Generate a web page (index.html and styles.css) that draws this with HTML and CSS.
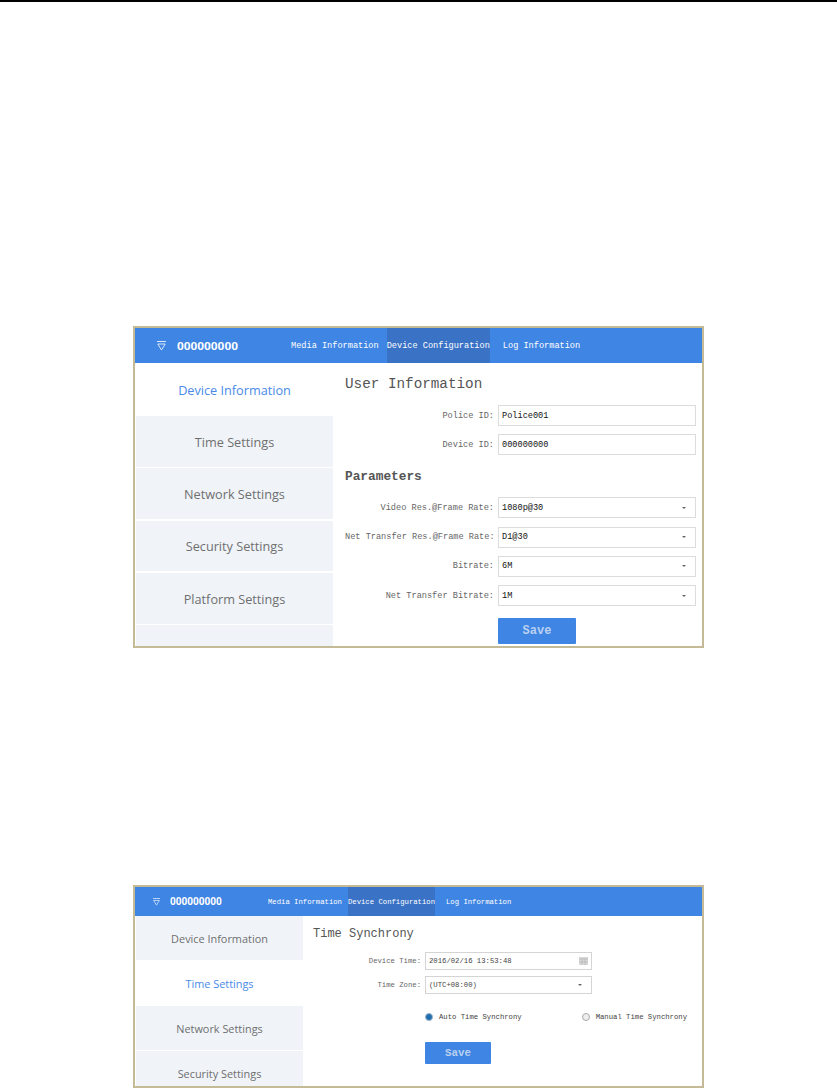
FILE: index.html
```html
<!DOCTYPE html>
<html lang="en">

<head>
    <meta charset="UTF-8">
    <meta name="viewport" content="width=device-width, initial-scale=1.0">
    <title>Device Configuration</title>
    <link rel="stylesheet" href="styles.css">
</head>

<body>
    <div class="top_rule"></div>

    <div class="frame frame_large">
        <div class="header">
            <div class="brand">
                <svg class="brand_icon" viewBox="0 0 9 10"><path d="M0 .5H9M.8 3H8.2L4.5 9Z" /></svg>
                <span class="brand_name">000000000</span>
            </div>
            <div class="nav">
                <div class="nav_item">Media Information</div>
                <div class="nav_item nav_active">Device Configuration</div>
                <div class="nav_item">Log Information</div>
            </div>
        </div>
        <div class="body">
            <div class="side">
                <div class="side_item side_active">Device Information</div>
                <div class="side_item">Time Settings</div>
                <div class="side_item">Network Settings</div>
                <div class="side_item">Security Settings</div>
                <div class="side_item">Platform Settings</div>
                <div class="side_item"></div>
            </div>
            <div class="content">
                <div class="heading">User Information</div>
                <div class="row"><label>Police ID:</label><div class="field">Police001</div></div>
                <div class="row"><label>Device ID:</label><div class="field">000000000</div></div>
                <div class="subheading">Parameters</div>
                <div class="row"><label>Video Res.@Frame Rate:</label><div class="field">1080p@30<i class="caret"></i></div></div>
                <div class="row"><label>Net Transfer Res.@Frame Rate:</label><div class="field">D1@30<i class="caret"></i></div></div>
                <div class="row"><label>Bitrate:</label><div class="field">6M<i class="caret"></i></div></div>
                <div class="row"><label>Net Transfer Bitrate:</label><div class="field">1M<i class="caret"></i></div></div>
                <div class="save">Save</div>
            </div>
        </div>
    </div>

    <div class="frame frame_small">
        <div class="header">
            <div class="brand">
                <svg class="brand_icon" viewBox="0 0 9 10"><path d="M0 .5H9M.8 3H8.2L4.5 9Z" /></svg>
                <span class="brand_name">000000000</span>
            </div>
            <div class="nav">
                <div class="nav_item">Media Information</div>
                <div class="nav_item nav_active">Device Configuration</div>
                <div class="nav_item">Log Information</div>
            </div>
        </div>
        <div class="body">
            <div class="side">
                <div class="side_item">Device Information</div>
                <div class="side_item side_active">Time Settings</div>
                <div class="side_item">Network Settings</div>
                <div class="side_item">Security Settings</div>
            </div>
            <div class="content">
                <div class="heading">Time Synchrony</div>
                <div class="row"><label>Device Time:</label><div class="field">2016/02/16 13:53:48
                    <svg class="calendar" viewBox="0 0 9 9"><path d="M0 1H9V9H0Z" fill="#d8d8d8" /><path d="M0 3H9M3 3V9M6 3V9M0 6H9" stroke="#b5b5b5" stroke-width=".7" /></svg>
                </div></div>
                <div class="row"><label>Time Zone:</label><div class="field">(UTC+08:00)<i class="caret"></i></div></div>
                <div class="radios">
                    <div class="radio"><i class="dot dot_on"></i>Auto Time Synchrony</div>
                    <div class="radio"><i class="dot"></i>Manual Time Synchrony</div>
                </div>
                <div class="save">Save</div>
            </div>
        </div>
    </div>
</body>

</html>
```

FILE: styles.css
```css
body {
    margin: 0;
    background: #fff;
    font-family: "Liberation Mono", monospace;
}

.top_rule {
    height: 2px;
    background: #000;
}

.frame {
    box-sizing: border-box;
    width: 571px;
    margin-left: 133px;
    border: 2px solid #c4bb96;
    display: flex;
    flex-direction: column;
    overflow: hidden;
}

.frame_large {
    height: 322px;
    margin-top: 324px;
}

.frame_small {
    height: 203px;
    margin-top: 237px;
}

.header {
    flex: none;
    background: #3f85e3;
    color: #fff;
    display: flex;
    align-items: stretch;
}

.frame_large .header {
    height: 35px;
}

.frame_small .header {
    height: 29px;
}

.brand {
    display: flex;
    align-items: center;
}

.frame_large .brand {
    width: 134px;
    padding-left: 22px;
    gap: 11px;
}

.frame_small .brand {
    width: 115px;
    padding-left: 18px;
    gap: 10px;
}

.brand_icon {
    fill: none;
    stroke: #dce8fa;
    stroke-width: 1;
}

.frame_large .brand_icon {
    width: 9px;
    height: 10px;
}

.frame_small .brand_icon {
    width: 7px;
    height: 8px;
}

.brand_name {
    font-family: Roboto, sans-serif;
    font-weight: 700;
}

.frame_large .brand_name {
    font-size: 11.8px;
}

.frame_small .brand_name {
    font-size: 10px;
}

.nav {
    display: flex;
    align-items: stretch;
}

.nav_item {
    display: flex;
    align-items: center;
    white-space: nowrap;
}

.frame_large .nav {
    gap: 8px;
    font-size: 8.6px;
}

.frame_small .nav {
    gap: 6px;
    font-size: 7.25px;
}

.nav_active {
    background: #3a72c6;
}

.frame_large .nav_active {
    margin-right: 5px;
}

.frame_small .nav_active {
    margin-right: 5px;
}

.body {
    flex: 1;
    min-height: 0;
    display: flex;
    padding-left: 1px;
}

.side {
    flex: none;
    overflow: hidden;
    font-family: "Open Sans", sans-serif;
    color: #6f6f6f;
}

.frame_large .side {
    width: 197px;
    padding-top: 0.7px;
    font-size: 12.7px;
}

.frame_small .side {
    width: 167px;
    font-size: 10.9px;
}

.side_item {
    box-sizing: border-box;
    background: #f0f4f9;
    display: flex;
    align-items: center;
    justify-content: center;
}

.frame_large .side_item {
    height: 50.7px;
    margin-bottom: 1.6px;
    padding-top: 1px;
}

.frame_small .side_item {
    height: 43.5px;
    margin-bottom: 1.5px;
    padding-top: 0.5px;
}

.side .side_active {
    background: #fff;
    color: #4a8ae8;
}

.content {
    flex: 1;
    color: #666;
}

.frame_large .content {
    padding: 11px 6px 0 12px;
}

.frame_small .content {
    padding: 10px 0 0 10px;
}

.heading {
    color: #555;
}

.frame_large .heading {
    height: 20px;
    line-height: 20px;
    margin-bottom: 11px;
    font-size: 14.3px;
}

.frame_small .heading {
    height: 16px;
    line-height: 16px;
    margin-bottom: 10px;
    font-size: 12px;
}

.subheading {
    height: 18px;
    line-height: 18px;
    margin: 13px 0 11px;
    font-size: 12.8px;
    font-weight: 700;
    color: #555;
}

.row {
    display: flex;
    align-items: stretch;
}

.frame_large .row {
    height: 21px;
    margin-bottom: 8.3px;
    font-size: 8.6px;
}

.frame_small .row {
    height: 17.5px;
    margin-bottom: 6.5px;
    font-size: 7.25px;
}

.row label {
    align-self: center;
    text-align: right;
    white-space: nowrap;
}

.frame_large .row label {
    width: 149px;
    margin-right: 4px;
}

.frame_small .row label {
    width: 108px;
    margin-right: 4px;
}

.field {
    box-sizing: border-box;
    position: relative;
    display: flex;
    align-items: center;
    padding-left: 3px;
    border: 1px solid #dcdcdc;
    color: #111;
    white-space: nowrap;
}

.frame_large .field {
    width: 198px;
}

.frame_small .field {
    width: 167px;
    color: #444;
    border-color: #d4d4d4;
}

.caret {
    position: absolute;
    top: 50%;
    right: 9px;
    margin-top: -1px;
    border-top: 2px solid #666;
    border-left: 2.5px solid transparent;
    border-right: 2.5px solid transparent;
}

.calendar {
    position: absolute;
    top: 50%;
    right: 3px;
    width: 9px;
    height: 9px;
    margin-top: -4.5px;
}

.radios {
    display: flex;
    justify-content: space-between;
    margin: 16px 15px 0 112px;
    font-size: 7.25px;
    color: #444;
}

.radio {
    display: flex;
    align-items: center;
    gap: 6px;
    height: 14px;
}

.dot {
    box-sizing: border-box;
    width: 8px;
    height: 8px;
    border-radius: 50%;
    border: 1px solid #aaa;
    background: #eee;
}

.dot_on {
    border-color: #9db4c8;
    background: #1f6fb0;
}

.save {
    background: #3f85e3;
    color: #b9d0f0;
    border-radius: 1px;
    display: flex;
    align-items: center;
    justify-content: center;
    font-weight: 700;
}

.frame_large .save {
    width: 78px;
    height: 26px;
    margin: 12px 0 0 153px;
    font-size: 12px;
}

.frame_small .save {
    width: 66px;
    height: 22px;
    margin: 18.5px 0 0 112px;
    font-size: 10.8px;
}
```
